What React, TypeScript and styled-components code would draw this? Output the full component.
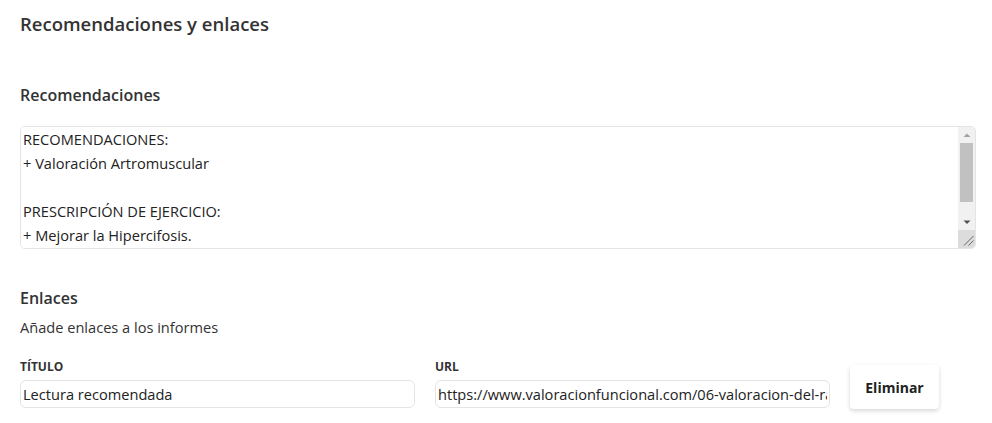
import React from 'react';
import styled, { createGlobalStyle } from 'styled-components';

const GlobalStyle = createGlobalStyle`
  html, body {
    margin: 0;
    padding: 0;
    background: #fff;
  }
  body {
    font-family: 'Open Sans', 'Liberation Sans', sans-serif;
    color: #333;
  }
  * {
    box-sizing: border-box;
  }
`;

const recommendations = `RECOMENDACIONES:
+ Valoración Artromuscular

PRESCRIPCIÓN DE EJERCICIO:
+ Mejorar la Hipercifosis.
+ Fortalecimiento de la musculatura estabilizadora.
+ Trabajo de movilidad articular.`;

export default function App() {
  return (
    <>
      <GlobalStyle />
      <Page>
        <PageTitle>Recomendaciones y enlaces</PageTitle>

        <Section>
          <SectionTitle>Recomendaciones</SectionTitle>
          <TextBox>
            <TextArea defaultValue={recommendations} />
            <ScrollBar>
              <ScrollButton>
                <svg width='16' height='16' viewBox='0 0 16 16'>
                  <path d='M4.5 10h7L8 6.5z' fill='#a3a3a3' />
                </svg>
              </ScrollButton>
              <Track>
                <Thumb />
              </Track>
              <ScrollButton>
                <svg width='16' height='16' viewBox='0 0 16 16'>
                  <path d='M4.5 6.5h7L8 10z' fill='#505050' />
                </svg>
              </ScrollButton>
              <Resizer>
                <svg width='17' height='17' viewBox='0 0 17 17'>
                  <path d='M6 15.5L15.5 6M10.5 15.5L15.5 10.5' stroke='#666' strokeWidth='1' />
                </svg>
              </Resizer>
            </ScrollBar>
          </TextBox>
        </Section>

        <Section>
          <SectionTitle>Enlaces</SectionTitle>
          <Hint>Añade enlaces a los informes</Hint>
          <LinkRow>
            <Field>
              <Label>Título</Label>
              <Input defaultValue='Lectura recomendada' />
            </Field>
            <Field>
              <Label>URL</Label>
              <Input defaultValue='https://www.valoracionfuncional.com/06-valoracion-del-raquis' />
            </Field>
            <RemoveButton>Eliminar</RemoveButton>
          </LinkRow>
        </Section>
      </Page>
    </>
  );
}

const Page = styled.div`
  padding: 12px 16px 15px 20px;
  width: 992px;
`;

const PageTitle = styled.h1`
  margin: 0;
  font-size: 18.5px;
  line-height: 24px;
  font-weight: 600;
  color: #333;
`;

const Section = styled.section`
  display: flex;
  flex-direction: column;
  margin-top: 47px;

  & + & {
    margin-top: 37px;
  }
`;

const SectionTitle = styled.h2`
  margin: 0 0 19px;
  font-size: 16px;
  line-height: 24px;
  font-weight: 600;
  color: #333;
`;

const TextBox = styled.div`
  display: flex;
  width: 956px;
  height: 123px;
  border: 1.5px solid #e4e4e4;
  border-radius: 5px;
  overflow: hidden;
  background: #fff;
`;

const TextArea = styled.textarea`
  flex: 1;
  padding: 0 2px;
  border: none;
  font-family: inherit;
  font-size: 14.6px;
  line-height: 24px;
  color: #222;
  resize: none;
  overflow: hidden;
  outline: none;
`;

const ScrollBar = styled.div`
  display: flex;
  flex-direction: column;
  width: 17px;
  background: #f1f1f1;
`;

const ScrollButton = styled.div`
  display: flex;
  align-items: center;
  justify-content: center;
  height: 16px;
`;

const Track = styled.div`
  flex: 1;
  padding: 0 2px 10px;
`;

const Thumb = styled.div`
  height: 59px;
  background: #c1c1c1;
`;

const Resizer = styled.div`
  height: 18px;
  background: #dcdcdc;
  line-height: 0;
`;

const Hint = styled.p`
  margin: -14px 0 0;
  font-size: 14.6px;
  line-height: 24px;
  color: #333;
`;

const LinkRow = styled.div`
  display: flex;
  align-items: flex-end;
  gap: 20px;
  margin-top: 20px;
`;

const Field = styled.div`
  display: flex;
  flex-direction: column;
  width: 395px;
`;

const Label = styled.label`
  font-size: 12px;
  line-height: 16px;
  font-weight: 700;
  text-transform: uppercase;
  color: #333;
  margin-bottom: 5px;
`;

const Input = styled.input`
  height: 28px;
  padding: 0 2px;
  border: 1.5px solid #e4e4e4;
  border-radius: 6px;
  font-family: inherit;
  font-size: 14.6px;
  color: #222;
  outline: none;
`;

const RemoveButton = styled.button`
  height: 44px;
  width: 89px;
  margin-bottom: -1px;
  border: none;
  border-radius: 4px;
  background: #fff;
  box-shadow: 0 2px 4px rgba(0, 0, 0, 0.16);
  font-family: inherit;
  font-size: 14px;
  font-weight: 700;
  color: #222;
  cursor: pointer;
`;
